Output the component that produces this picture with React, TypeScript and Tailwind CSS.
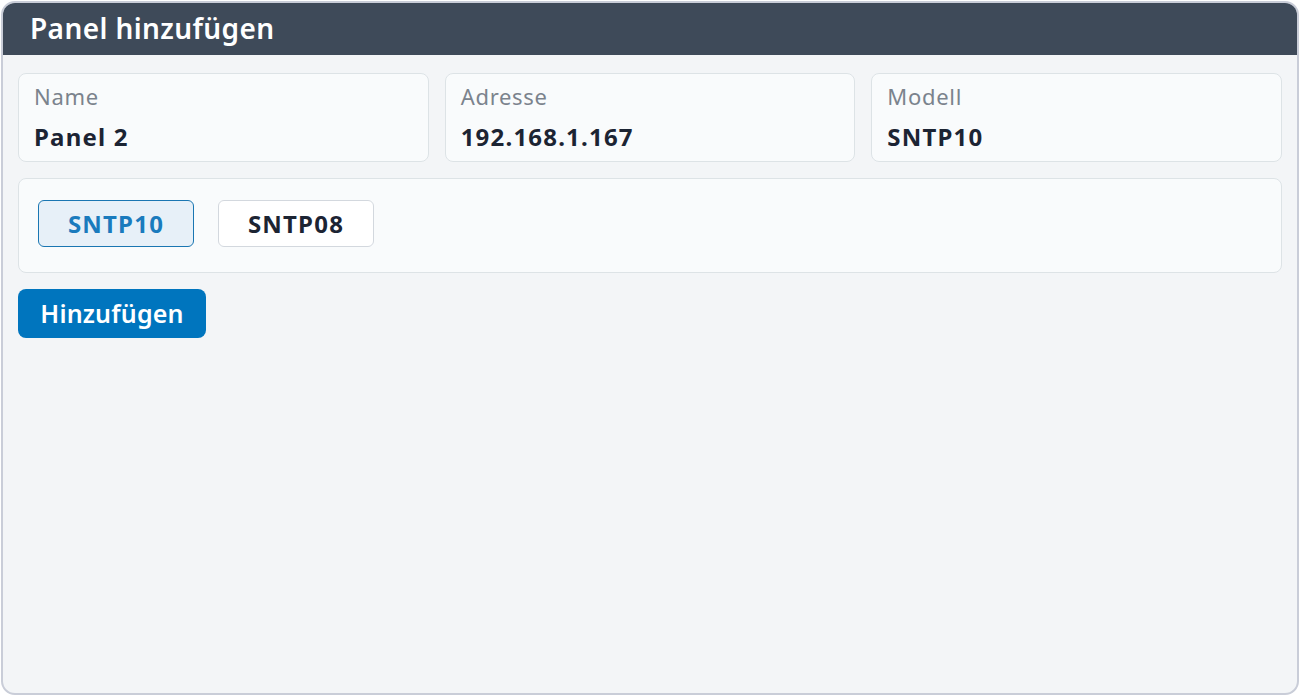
import React, { useState } from 'react';

const fields = [
  { label: 'Name', value: 'Panel 2' },
  { label: 'Adresse', value: '192.168.1.167' },
  { label: 'Modell', value: 'SNTP10' },
];

const models = ['SNTP10', 'SNTP08'];

export default function App() {
  const [model, setModel] = useState('SNTP10');

  return (
    <div
      className="w-[1300px] h-[696px] bg-white p-px"
      style={{ fontFamily: '"Noto Sans", "Open Sans", sans-serif' }}
    >
      <div className="h-full flex flex-col rounded-[14px] border-2 border-[#c9cdd8] bg-[#f3f5f7] overflow-hidden">
        <div className="h-[52px] shrink-0 bg-[#3e4a59] flex items-center px-[27px] pb-[3px]">
          <h1 className="text-[28px] font-semibold tracking-[0.4px] text-white leading-none">Panel hinzufügen</h1>
        </div>

        <div className="flex flex-col gap-4 px-[15px] pt-[18px]">
          <div className="grid grid-cols-3 gap-4">
            {fields.map((f) => (
              <div
                key={f.label}
                className="h-[89px] rounded-lg border border-[#dde3e6] bg-[#f9fbfc] px-[15px] pt-[8px]"
              >
                <div className="text-[22px] tracking-[0.7px] text-[#7b838d] leading-[28px]">{f.label}</div>
                <div className="mt-[13px] text-[24px] font-bold tracking-[1.2px] text-[#1c2433] leading-[28px]">
                  {f.value}
                </div>
              </div>
            ))}
          </div>

          <div className="h-[95px] rounded-lg border border-[#dde3e6] bg-[#f9fbfc] flex items-start gap-6 px-[19px] pt-[21px]">
            {models.map((m) => {
              const active = m === model;
              return (
                <button
                  key={m}
                  onClick={() => setModel(m)}
                  className={
                    active
                      ? 'w-[156px] h-[47px] rounded-md border border-[#1a76b2] bg-[#e7f0f8] text-[#1a7bbd] text-[24px] font-bold tracking-[1.2px]'
                      : 'w-[156px] h-[47px] rounded-md border border-[#d3d8de] bg-white text-[#1c2433] text-[24px] font-bold tracking-[1.2px]'
                  }
                >
                  {m}
                </button>
              );
            })}
          </div>

          <div>
            <button className="w-[188px] h-[49px] rounded-lg bg-[#0075be] text-white text-[25px] font-semibold tracking-[0.2px]">
              Hinzufügen
            </button>
          </div>
        </div>
      </div>
    </div>
  );
}
